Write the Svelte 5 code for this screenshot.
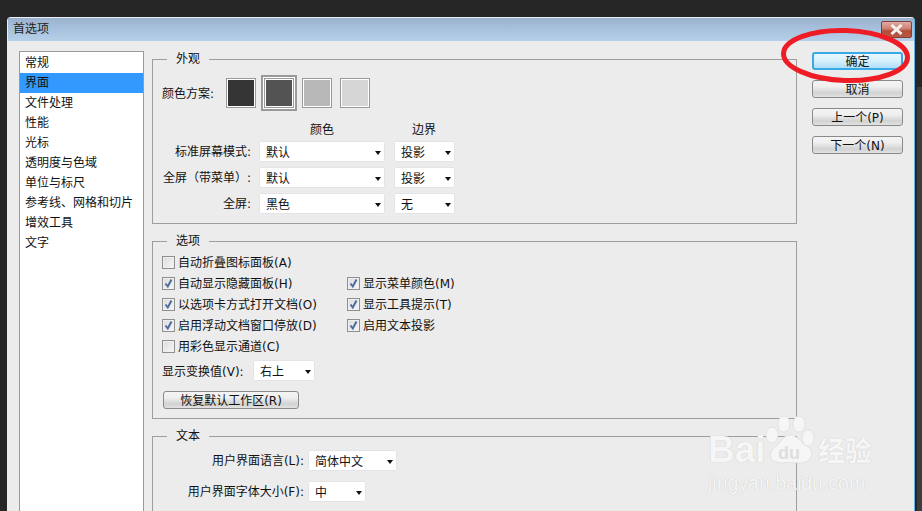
<script>
  const nav = ['常规','界面','文件处理','性能','光标','透明度与色域','单位与标尺','参考线、网格和切片','增效工具','文字'];
  const swatches = [
    { c: '#353535' }, { c: '#535353', on: true }, { c: '#b8b8b8' }, { c: '#d6d6d6' }
  ];
  const rows = [
    { label: '标准屏幕模式:', a: '默认', b: '投影' },
    { label: '全屏（带菜单）:', a: '默认', b: '投影' },
    { label: '全屏:', a: '黑色', b: '无' }
  ];
  const options = [
    { t: '自动折叠图标面板(A)' }, { t: '', empty: true },
    { t: '自动显示隐藏面板(H)', on: true }, { t: '显示菜单颜色(M)', on: true },
    { t: '以选项卡方式打开文档(O)', on: true }, { t: '显示工具提示(T)', on: true },
    { t: '启用浮动文档窗口停放(D)', on: true }, { t: '启用文本投影', on: true },
    { t: '用彩色显示通道(C)' }, { t: '', empty: true }
  ];
  const actions = ['确定','取消','上一个(P)','下一个(N)'];
</script>

<div class="page">
  <div class="window">
    <header class="title">
      <span>首选项</span>
      <button class="close" aria-label="关闭">
        <svg width="15" height="11" viewBox="0 0 15 11"><path d="M2.5 1 L12.5 10 M12.5 1 L2.5 10" stroke="#f4f0f0" stroke-width="3" fill="none"/></svg>
      </button>
    </header>

    <div class="body">
      <ul class="nav">
        {#each nav as item, i}
          <li class:sel={i === 1}>{item}</li>
        {/each}
      </ul>

      <main class="main">
        <fieldset class="look">
          <legend>外观</legend>
          <div class="schemes">
            <span class="scheme-label">颜色方案:</span>
            {#each swatches as s, i}
              <span class="swatch" class:on={s.on} class:last={i === 3} style="background:{s.c}"></span>
            {/each}
          </div>
          <div class="form">
            <span></span><span class="head">颜色</span><span class="head">边界</span>
            {#each rows as r}
              <span class="lab">{r.label}</span>
              <div class="select"><span>{r.a}</span><i></i></div>
              <div class="select"><span>{r.b}</span><i></i></div>
            {/each}
          </div>
        </fieldset>

        <fieldset class="opts">
          <legend>选项</legend>
          <div class="checks">
            {#each options as o}
              {#if o.empty}
                <span></span>
              {:else}
                <label class="check">
                  <span class="box">
                    {#if o.on}
                      <svg width="11" height="11" viewBox="0 0 11 11"><path d="M2.5 5.5 L4.8 8.5 L8.5 1.5" stroke="#4d6c9c" stroke-width="2" fill="none"/></svg>
                    {/if}
                  </span>
                  {o.t}
                </label>
              {/if}
            {/each}
          </div>
          <div class="transform">
            <span>显示变换值(V):</span>
            <div class="select small"><span>右上</span><i></i></div>
          </div>
          <button class="btn reset">恢复默认工作区(R)</button>
        </fieldset>

        <fieldset class="text">
          <legend>文本</legend>
          <div class="lang">
            <span class="lab">用户界面语言(L):</span>
            <div class="select wide"><span>简体中文</span><i></i></div>
            <span class="lab">用户界面字体大小(F):</span>
            <div class="select narrow"><span>中</span><i></i></div>
          </div>
        </fieldset>
      </main>

      <aside class="actions">
        {#each actions as a, i}
          <button class="btn" class:primary={i === 0}>{a}</button>
        {/each}
      </aside>
    </div>
  </div>

  <span class="strip"></span>

  <svg class="ring" width="922" height="120" viewBox="0 0 922 120">
    <ellipse cx="845.5" cy="55.5" rx="62" ry="25" transform="rotate(2 845.5 55.5)" fill="none" stroke="#ee1c25" stroke-width="5"/>
  </svg>

  <div class="mark">
    <svg class="paw" width="60" height="56" viewBox="0 0 60 56">
      <g fill="#f6f6f6" stroke="#d8d8d8" stroke-width=".6">
        <ellipse cx="22" cy="11" rx="6" ry="8"/>
        <ellipse cx="37" cy="11" rx="6" ry="8"/>
        <ellipse cx="10" cy="22" rx="6" ry="8"/>
        <ellipse cx="46" cy="25" rx="6" ry="8"/>
        <path d="M28 22 C36 22 38 30 46 34 C54 40 48 50 38 50 C32 50 26 49 20 50 C8 50 5 40 13 34 C20 30 20 22 28 22Z"/>
      </g>
    </svg>
    <span class="du">du</span>
    <div class="mark-top"><span class="bai">Bai</span><span class="jy">经验</span></div>
    <div class="url">jingyan.baidu.com</div>
  </div>
</div>

<style>
  :global(body) { margin: 0; background: #262626; }
  .page {
    width: 922px; height: 511px; overflow: hidden; position: relative;
    background: #262626; padding: 17px 7px 0; box-sizing: border-box;
    font: 12px/16px "DejaVu Sans", "Noto Sans CJK SC", sans-serif; color: #111;
  }
  .window {
    width: 908px; height: 520px; box-sizing: border-box; background: #ececec;
    border: 1px solid #e8eef4; border-right-color: #63b4e4; border-radius: 4px 4px 0 0;
  }
  .title {
    height: 23px; display: flex; align-items: flex-start; justify-content: space-between;
    background: linear-gradient(#9ab2ce, #b6d0ea); padding: 0 2px 0 5px; color: #222;
  }
  .title > span { line-height: 23px; }
  .close {
    width: 31px; height: 17px; margin-top: 3px; padding: 0; border: 1px solid #7d3f38; border-radius: 2px;
    background: linear-gradient(#e0aca4, #cf7f72 45%, #b24a36 60%, #b85a42);
    display: flex; align-items: center; justify-content: center;
  }
  .body { display: flex; align-items: flex-start; padding: 10px 0 0 11px; }
  .nav {
    list-style: none; margin: 0; padding: 1px 0 0; width: 125px; height: 480px; box-sizing: border-box;
    background: #fff; border: 1px solid #9a9a9a;
  }
  .nav li { height: 20px; line-height: 20px; padding-left: 5px; white-space: nowrap; }
  .nav li.sel { background: #3399ff; }
  .main { width: 645px; margin-left: 8px; display: flex; flex-direction: column; gap: 9px; }
  fieldset { margin: 0; border: 1px solid #9e9e9e; padding: 0 0 9px 9px; min-width: 0; }
  legend { margin-left: 5px; padding: 0 9px; height: 17px; line-height: 17px; }
  .schemes { display: flex; align-items: center; padding-top: 7px; height: 36px; }
  .scheme-label { width: 64px; padding-top: 2px; }
  .swatch {
    width: 30px; height: 30px; box-sizing: border-box; margin-right: 5px;
    border: 1px solid #999; outline: 1px solid #fff; outline-offset: -2px;
  }
  .swatch.on {
    width: 36px; height: 36px; border-width: 2px; outline: none;
    box-shadow: inset 0 0 0 1px #fff, inset 0 0 0 2px #999, inset 0 0 0 3px #fff;
  }
  .swatch.last { margin-left: 3px; }
  .form {
    display: grid; grid-template-columns: 89px 126px 62px; column-gap: 8px; row-gap: 5px;
    margin-top: 11px; align-items: center;
  }
  .form > span:nth-child(-n+3) { margin-bottom: -1px; }
  .head { text-align: center; height: 15px; line-height: 16px; }
  .lab { text-align: right; white-space: nowrap; padding-top: 1px; }
  .select {
    height: 21px; box-sizing: border-box; background: #fff; border-radius: 2px;
    box-shadow: inset 0 0 0 1px #e4e4e8; display: flex; align-items: center;
    justify-content: space-between; padding: 2px 4px 0 7px;
  }
  .select i {
    width: 0; height: 0; border-left: 3.5px solid transparent; border-right: 3.5px solid transparent;
    border-top: 4px solid #111;
  }
  .form .select:nth-of-type(2n) { width: 61px; justify-self: end; }
  .checks { display: grid; grid-template-columns: 185px 1fr; grid-auto-rows: 21px; padding-top: 2px; }
  .check { display: flex; align-items: center; gap: 3px; white-space: nowrap; }
  .box {
    width: 13px; height: 13px; box-sizing: border-box; border: 1px solid #8f8f8f;
    background: linear-gradient(135deg, #dcdcdc, #f6f6f6); box-shadow: inset 0 0 0 1px #f0f0f0;
    display: flex; align-items: center; justify-content: center;
  }
  .transform { display: flex; align-items: center; margin-top: 3px; }
  .transform > span { width: 91px; white-space: nowrap; padding-top: 2px; }
  .select.small { width: 62px; }
  .btn {
    font: inherit; color: #111; padding: 2px 0 0; box-sizing: border-box; height: 18px;
    border: 1px solid #8a8a8a; border-radius: 3px; line-height: 14px;
    background: linear-gradient(#f4f4f4, #efefef 35%, #d2d2d2 75%, #e2e2e2);
  }
  .reset { display: block; width: 136px; margin: 10px 0 0 1px; }
  .lang {
    display: grid; grid-template-columns: 142px auto; column-gap: 4px; row-gap: 10px;
    justify-content: start; justify-items: start; align-items: center; padding-top: 5px;
  }
  .lang .lab { justify-self: end; }
  .select.wide { width: 89px; }
  .select.narrow { width: 58px; }
  .actions { width: 91px; margin-left: 15px; display: flex; flex-direction: column; gap: 10px; margin-top: 1px; }
  .primary {
    border: 2px solid #38a9e4;
    padding-top: 1px;
    background: linear-gradient(#e9f7fe, #d8f0fc 45%, #aedffa);
  }
  .strip { position: absolute; right: 0; top: 87px; bottom: 0; width: 5px; background: #3d3d3d; }
  .ring { position: absolute; left: 0; top: 0; pointer-events: none; }
  .mark { position: absolute; left: 708px; top: 410px; width: 170px; height: 85px; pointer-events: none; color: #f6f6f6; text-shadow: 0 0 1px #bdbdbd; }
  .mark-top { position: absolute; left: 0; top: 22px; width: 164px; display: flex; justify-content: space-between; align-items: center; height: 36px; }
  .bai { font: bold 37px/36px "Liberation Sans", sans-serif; }
  .jy { font: bold 27px/36px "Noto Sans CJK SC", sans-serif; }
  .paw { position: absolute; left: 54px; top: 3px; }
  .du { position: absolute; left: 70px; top: 33px; font: bold 18px/20px "Liberation Sans", sans-serif; color: #dedede; z-index: 1; text-shadow: none; }
  .url { position: absolute; left: 0; top: 62px; font: 19.5px/22px "Liberation Sans", sans-serif; white-space: nowrap; }
</style>
